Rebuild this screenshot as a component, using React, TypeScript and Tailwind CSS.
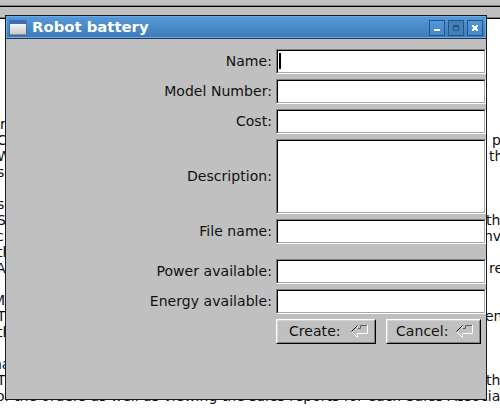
import React from "react";

type Line = { left?: string; leftShift?: string; right?: string; rightShift?: string };

const lines: Line[] = [
  { left: "r", leftShift: "ml-0" },
  { left: "C", leftShift: "-ml-[3px]", right: "p", rightShift: "ml-[5px]" },
  { left: "W", leftShift: "-ml-[3px]", right: "th", rightShift: "ml-[2px]" },
  { left: "so", leftShift: "-ml-[3px]" },
  {},
  { left: "so", leftShift: "-ml-[3px]" },
  { left: "S", leftShift: "-ml-[3px]", right: "the", rightShift: "-ml-px" },
  { left: "c", leftShift: "-ml-[4px]", right: "inv", rightShift: "-ml-[7px]" },
  { left: "th", leftShift: "-ml-[3px]" },
  { left: "A", leftShift: "-ml-[4px]", right: "re", rightShift: "ml-[2px]" },
  {},
  { left: "M", leftShift: "-ml-[7px]" },
  { left: "T", leftShift: "-ml-[3px]", right: "en", rightShift: "-ml-[2px]" },
  { left: "th", leftShift: "-ml-[3px]" },
  {},
  { left: "na", leftShift: "-ml-[7px]" },
  { left: "T", leftShift: "-ml-[3px]", right: "the", rightShift: "-ml-px" },
];

function Backdrop() {
  return (
    <div className="h-full w-full">
      <div className="h-[7px] border-b border-black bg-[#c0c0c0] shadow-[inset_0_-1px_#808080]" />
      <div className="h-[12px] border-b border-black bg-[#c0c0c0] shadow-[inset_0_-1px_#808080]" />
      <div className="pt-[97px] text-[14px] leading-4 text-[#111]">
        {lines.map((l, i) => (
          <div key={i} className="flex h-4 justify-between whitespace-nowrap">
            <div className="w-[5px] overflow-hidden">
              <span className={"block " + (l.leftShift ?? "")}>{l.left}</span>
            </div>
            <div className="w-[13px] overflow-hidden">
              <span className={"block " + (l.rightShift ?? "")}>{l.right}</span>
            </div>
          </div>
        ))}
        <div className="-ml-[4px] h-4 whitespace-nowrap">
          of the orders as well as viewing the sales reports for each Sales Associate
        </div>
      </div>
    </div>
  );
}

function TitleButton({ kind }: { kind: "min" | "max" | "close" }) {
  return (
    <div
      className={
        "flex h-4 w-4 items-center justify-center border border-[#2c5480] " +
        (kind === "max" ? "bg-[#3f7fbe]" : "bg-linear-to-b from-[#5497d8] to-[#4587c8]")
      }
    >
      <svg width="14" height="14" viewBox="0 0 14 14" shapeRendering="crispEdges">
        {kind === "min" && <path d="M4 8h6v2H4z" fill="#fff" />}
        {kind === "max" && <path d="M4 4h6v6H4zM5 6v3h4V6z" fill="#2c5480" fillRule="evenodd" />}
        {kind === "close" && (
          <path d="M4 4h2v1h2V4h2v2H9v2h1v2H8V9H6v1H4V8h1V6H4z" fill="#fff" />
        )}
      </svg>
    </div>
  );
}

function Row({ label, tall, cursor }: { label: string; tall?: boolean; cursor?: boolean }) {
  return (
    <div className="flex items-center justify-end">
      <label className="mr-[4px] pb-[2px]">{label}</label>
      <div
        className={
          "w-[210px] border border-t-[#808080] border-r-white border-b-white border-l-[#808080] " +
          (tall ? "h-[75px]" : "h-[25px]")
        }
      >
        <div className="h-full border border-t-black border-r-[#a8a8a8] border-b-[#a8a8a8] border-l-black bg-white pt-[2px] pl-px">
          {cursor && <div className="h-4 w-[2px] bg-black" />}
        </div>
      </div>
    </div>
  );
}

function PushButton({ label, width, inset }: { label: string; width: string; inset: string }) {
  return (
    <button
      className={
        "h-[25px] border border-t-white border-r-black border-b-black border-l-white text-left " + width
      }
    >
      <span className="flex h-full items-center border border-t-[#d4d4d4] border-r-[#808080] border-b-[#808080] border-l-[#d4d4d4] bg-[#c0c0c0]">
        <span className={"flex-1 pb-[2px] " + inset}>{label}</span>
        <svg className="mr-[5px] shrink-0" width="18" height="15" viewBox="0 0 18 15" fill="none">
          <path d="M0.5 7.5L6.5 13.5V9.5H16.5V1" stroke="#fff" />
          <path d="M6.5 2V4" stroke="#fff" />
          <path d="M0.5 7.5L6.5 1.5" stroke="#111" />
          <path d="M7 4.5H9.5V1.5H16" stroke="#606060" />
        </svg>
      </span>
    </button>
  );
}

function Dialog() {
  return (
    <div className="flex h-full flex-col border border-[#151b25] bg-[#c0c0c0]">
      <div className="flex h-[23px] items-center border-t border-b border-t-[#6bacec] border-b-[#1d3857] bg-linear-to-b from-[#5598d9] to-[#3d7ab7] pr-[3px] pl-[3px] shadow-[inset_1px_-1px_#6bacec,inset_-1px_0_#6bacec]">
        <svg width="18" height="16" viewBox="0 0 18 16">
          <defs>
            <linearGradient id="pane" x2="0" y2="1">
              <stop stopColor="#f4f4f4" />
              <stop offset="1" stopColor="#c9c9c6" />
            </linearGradient>
          </defs>
          <path d="M0 0h18v16H0z" fill="#2d557f" opacity=".4" />
          <path d="M1 0h16v5H1z" fill="#3d6db0" />
          <path d="M1 4h16v10H1z" fill="url(#pane)" />
          <path d="M1 14.5h16" stroke="#92918c" />
        </svg>
        <h1 className="ml-[5px] flex-1 pb-px text-[14.85px] leading-5 font-bold text-white">Robot battery</h1>
        <div className="flex gap-[3px]">
          <TitleButton kind="min" />
          <TitleButton kind="max" />
          <TitleButton kind="close" />
        </div>
      </div>
      <div className="flex flex-col gap-[5px] pt-[10px] text-[14px] leading-4 tracking-[0.05px] text-[#111]">
        <Row label="Name:" cursor />
        <Row label="Model Number:" />
        <Row label="Cost:" />
        <Row label="Description:" tall />
        <Row label="File name:" />
        <div className="h-[5px]" />
        <Row label="Power available:" />
        <Row label="Energy available:" />
        <div className="flex justify-end gap-[10px] pr-[5px]">
          <PushButton label="Create:" width="w-[100px]" inset="pl-[11px]" />
          <PushButton label="Cancel:" width="w-[95px]" inset="pl-[8px]" />
        </div>
      </div>
    </div>
  );
}

export default function App() {
  return (
    <div className="relative h-[408px] w-[500px] overflow-hidden bg-white font-['DejaVu_Sans',sans-serif]">
      <Backdrop />
      <div className="absolute top-[15px] left-[5px] h-[385px] w-[482px]">
        <Dialog />
      </div>
    </div>
  );
}
